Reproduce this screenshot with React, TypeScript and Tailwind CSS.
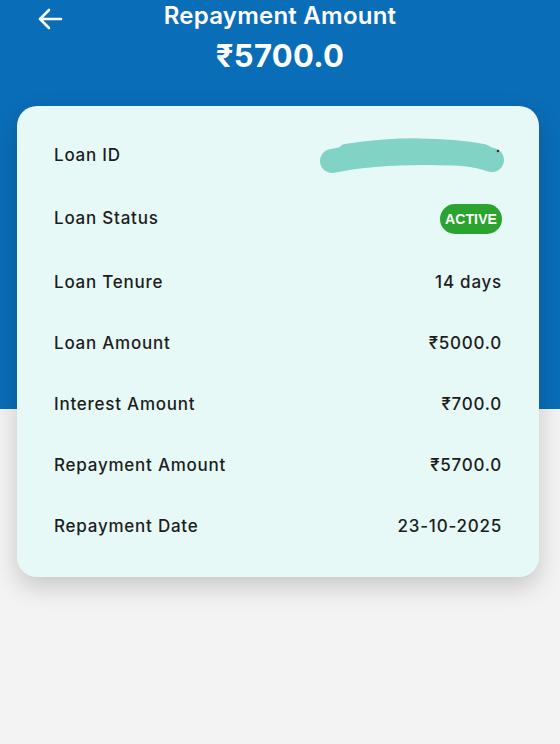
import { ReactNode } from "react";

const rows: { label: string; value: ReactNode }[] = [
  { label: "Loan ID", value: "redacted" },
  { label: "Loan Status", value: "active" },
  { label: "Loan Tenure", value: "14 days" },
  { label: "Loan Amount", value: "₹5000.0" },
  { label: "Interest Amount", value: "₹700.0" },
  { label: "Repayment Amount", value: "₹5700.0" },
  { label: "Repayment Date", value: "23-10-2025" },
];

function Scribble() {
  return (
    <svg width="190" height="42" viewBox="0 0 190 42" className="-my-[2px] -mr-[4px]">
      <path
        d="M16 26 C 40 21, 70 18, 110 18 S 160 20, 176 25"
        stroke="#80d3c5"
        strokeWidth="24"
        strokeLinecap="round"
        fill="none"
      />
      <path
        d="M30 17 C 80 9, 130 10, 168 17"
        stroke="#80d3c5"
        strokeWidth="16"
        strokeLinecap="round"
        fill="none"
      />
      <circle cx="182" cy="16" r="1.3" fill="#333" />
    </svg>
  );
}

function Value({ label, value }: { label: string; value: ReactNode }) {
  if (value === "redacted") return <Scribble />;
  if (value === "active")
    return (
      <span className="flex h-[30px] w-[62px] items-center justify-center rounded-full bg-[#2ba42f] font-['Liberation_Sans',sans-serif] text-[14px] font-bold tracking-[0.01em] text-white">
        ACTIVE
      </span>
    );
  return <span aria-label={label}>{value}</span>;
}

export default function App() {
  return (
    <div className="min-h-[744px] bg-[#f3f3f3] font-['Inter','Noto_Sans',sans-serif]">
      {/* Header */}
      <div className="h-[409px] bg-[#0a6db8]">
        <div className="relative flex flex-col items-center pt-[1px] text-white">
          <button className="absolute left-[37px] top-[8px]">
            <svg width="26" height="22" viewBox="0 0 26 22" fill="none">
              <path
                d="M24 11H3M12 2L3 11l9 9"
                stroke="white"
                strokeWidth="2.6"
                strokeLinecap="round"
                strokeLinejoin="round"
              />
            </svg>
          </button>
          <h1 className="text-[24px] font-semibold leading-[30px] tracking-[0.01em]">
            Repayment Amount
          </h1>
          <p className="mt-[8px] text-[31px] font-bold leading-[34px] tracking-[0.01em]">
            ₹5700.0
          </p>
        </div>
      </div>

      {/* Details card */}
      <div className="ml-[17px] mr-[21px] -mt-[303px] rounded-[20px] bg-[#e6f9f7] px-[37px] pb-[20px] pt-[19px] shadow-[0_10px_24px_rgba(0,0,0,0.18)]">
        {rows.map((r) => (
          <div
            key={r.label}
            className={`flex items-center justify-between text-[17px] font-medium tracking-[0.045em] text-[#1d1d1d] ${
              r.value === "active" ? "h-[66px]" : "h-[61px]"
            }`}
          >
            <span>{r.label}</span>
            <Value label={r.label} value={r.value} />
          </div>
        ))}
      </div>
    </div>
  );
}
